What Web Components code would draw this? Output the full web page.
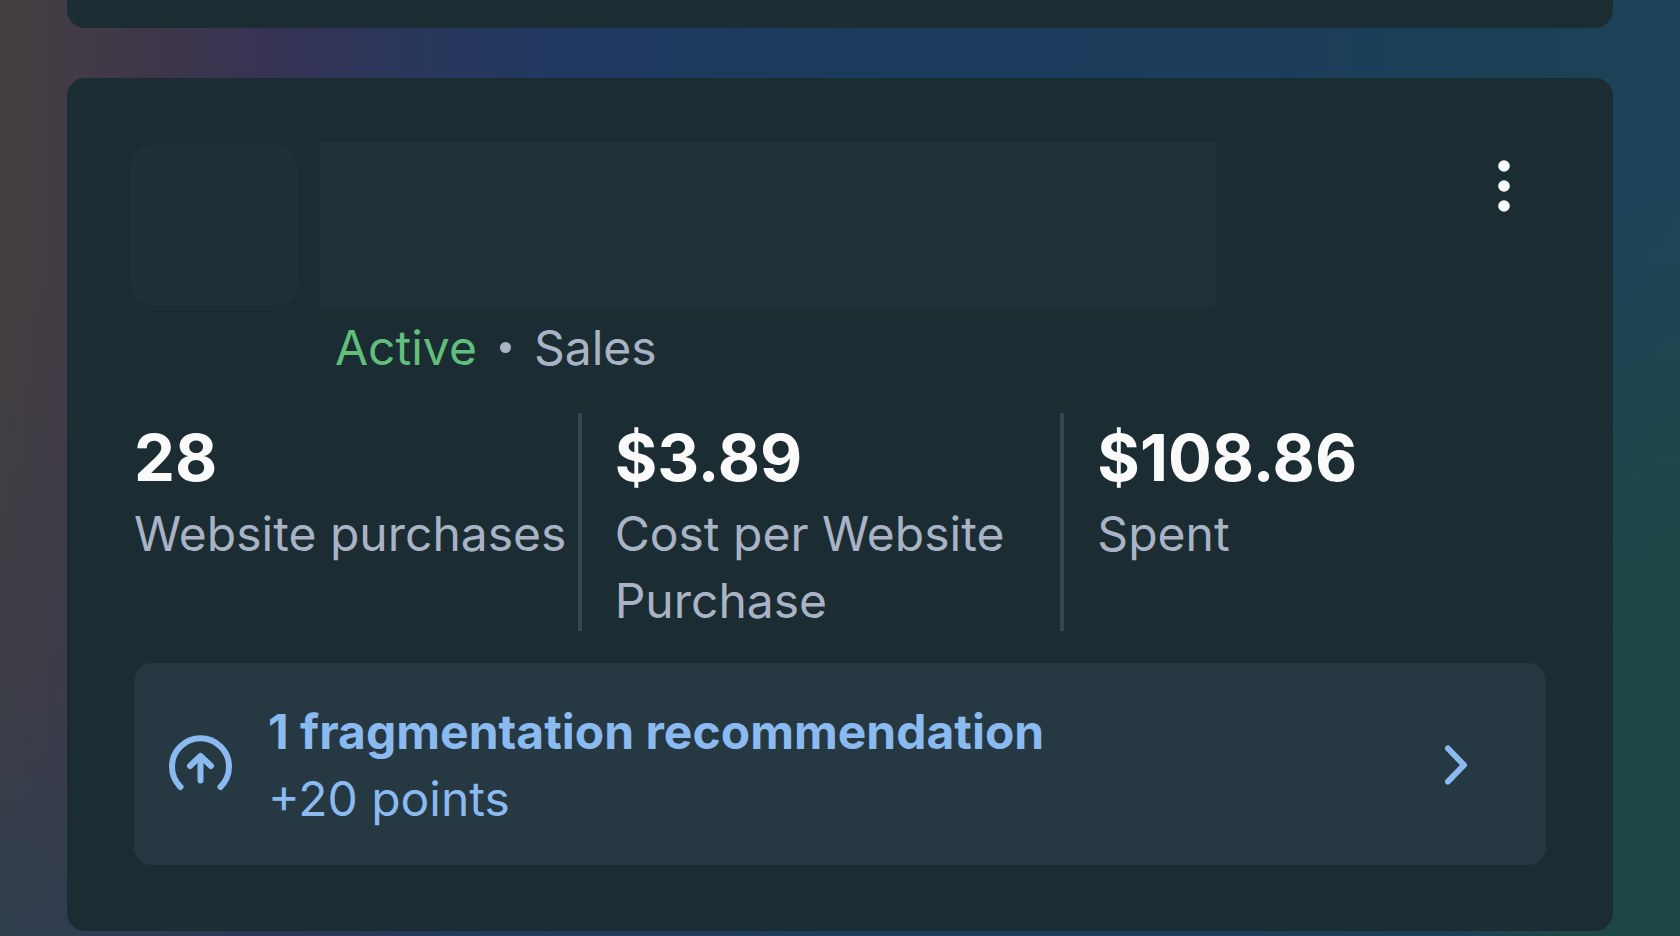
<!DOCTYPE html>
<html lang="en">
<head>
<meta charset="utf-8">
<meta name="viewport" content="width=device-width, initial-scale=1">
<title>Campaign overview</title>
<style>
  html { height: 100%; }
  body {
    margin: 0;
    min-height: 100%;
    font-family: Inter, "Noto Sans", sans-serif;
    background:
      radial-gradient(ellipse 14% 72% at 100% 92%, #1c4744 0%, #1c4744 40%, #1c474400 100%),
      linear-gradient(180deg, #2c3c5500 30%, #2c3c5555 75%, #203e5a88 100%),
      linear-gradient(90deg, #443f40 0%, #433b44 4%, #3d364a 10%, #373355 16%, #29365a 24%, #203860 33%, #1a3b5c 52%, #1b3c5a 75%, #1b4056 88%, #1e4358 100%);
  }
</style>
</head>
<body>
<campaign-feed>
  <campaign-card edge></campaign-card>
  <campaign-card>
    <campaign-header slot="header" status="Active" objective="Sales"></campaign-header>
    <metric-row slot="metrics">
      <metric-cell value="28">Website purchases</metric-cell>
      <metric-cell value="$3.89">Cost per Website Purchase</metric-cell>
      <metric-cell value="$108.86">Spent</metric-cell>
    </metric-row>
    <recommendation-link slot="footer" href="#recommendations">
      1 fragmentation recommendation
      <span slot="detail">+20 points</span>
    </recommendation-link>
  </campaign-card>
</campaign-feed>

<script>
  const define = (name, html, setup) => {
    const template = document.createElement('template');
    template.innerHTML = html;
    customElements.define(name, class extends HTMLElement {
      constructor() {
        super();
        this.attachShadow({ mode: 'open' }).append(template.content.cloneNode(true));
      }
      connectedCallback() {
        if (setup) setup(this, this.shadowRoot);
      }
    });
  };

  define('campaign-feed', `
    <style>
      :host { display: flex; flex-direction: column; gap: 50px; padding: 0 67px; }
    </style>
    <slot></slot>
  `);

  define('campaign-card', `
    <style>
      :host {
        display: block;
        padding: 64px 67px 66px;
        border-radius: 18px;
        background: #1b2d33;
      }
      :host([edge]) { padding: 28px 0 0; border-radius: 0 0 18px 18px; }
      article { display: flex; flex-direction: column; gap: 32px; }
      :host([edge]) article { display: none; }
    </style>
    <article>
      <slot name="header"></slot>
      <slot name="metrics"></slot>
      <slot name="footer"></slot>
    </article>
  `);

  define('campaign-header', `
    <style>
      :host { display: block; }
      .top { display: flex; align-items: center; gap: 22px; margin-left: -3px; }
      .thumb { flex: none; width: 166px; height: 160px; border-radius: 20px; background: #1f3138; }
      .name { flex: 0 1 896px; height: 165px; background: #1f3239; }
      button {
        flex: none;
        align-self: flex-start;
        display: grid;
        place-items: center;
        width: 84px;
        height: 88px;
        margin: 0 0 0 auto;
        padding: 0;
        border: 0;
        background: none;
        color: #fafafa;
      }
      p {
        display: flex;
        align-items: center;
        gap: 23px;
        margin: 7px 0 0 201px;
        font-size: 48px;
        line-height: 67px;
        color: #a9b3c5;
      }
      .status { color: #62bf7b; }
      .dot { width: 11px; height: 11px; border-radius: 50%; background: currentColor; }
    </style>
    <div class="top">
      <div class="thumb"></div>
      <div class="name"></div>
      <button type="button" aria-label="More options">
        <svg width="12" height="52" viewBox="0 0 12 52" fill="currentColor" aria-hidden="true">
          <circle cx="6" cy="6" r="5.8"/><circle cx="6" cy="26" r="5.8"/><circle cx="6" cy="46" r="5.8"/>
        </svg>
      </button>
    </div>
    <p><span class="status"></span><span class="dot"></span><span class="objective"></span></p>
  `, (host, root) => {
    root.querySelector('.status').textContent = host.getAttribute('status');
    root.querySelector('.objective').textContent = host.getAttribute('objective');
  });

  define('metric-row', `
    <style>
      :host { display: grid; grid-template-columns: 444fr 483fr 486fr; }
      ::slotted(*) { padding-top: 3px; }
      ::slotted(:not(:first-child)) { border-left: 4px solid #364554; padding-left: 33px; }
    </style>
    <slot></slot>
  `);

  define('metric-cell', `
    <style>
      :host { display: block; }
      .value { font-size: 65px; line-height: 84px; font-weight: 700; color: #fafafa; }
      .label { margin-bottom: -3px; font-size: 48px; line-height: 67px; color: #a9b3c5; }
    </style>
    <div class="value"></div>
    <div class="label"><slot></slot></div>
  `, (host, root) => {
    root.querySelector('.value').textContent = host.getAttribute('value');
  });

  define('recommendation-link', `
    <style>
      :host { display: block; }
      a {
        display: flex;
        align-items: center;
        gap: 36px;
        padding: 35px 78px 33px 34px;
        border-radius: 18px;
        background: #263842;
        color: #8abaf0;
        font-size: 48px;
        line-height: 67px;
        text-decoration: none;
      }
      svg { flex: none; fill: none; stroke: currentColor; stroke-linecap: round; stroke-linejoin: round; }
      .text { flex: 1; }
      .text span { display: block; }
      .title { font-weight: 700; }
    </style>
    <a>
      <svg width="64" height="64" viewBox="0 0 64 64" stroke-width="6" aria-hidden="true">
        <path d="M12.500 54A28.500 28.500 0 1 1 52.500 54"/>
        <path d="M32.500 47.500V23.500M22 33L32.500 23L43 33"/>
      </svg>
      <span class="text">
        <span class="title"><slot></slot></span>
        <span><slot name="detail"></slot></span>
      </span>
      <svg width="24" height="40" viewBox="0 0 24 40" stroke-width="6" aria-hidden="true">
        <path d="M4 3.500L20 20L4 36.500"/>
      </svg>
    </a>
  `, (host, root) => {
    root.querySelector('a').href = host.getAttribute('href');
  });
</script>
</body>
</html>
